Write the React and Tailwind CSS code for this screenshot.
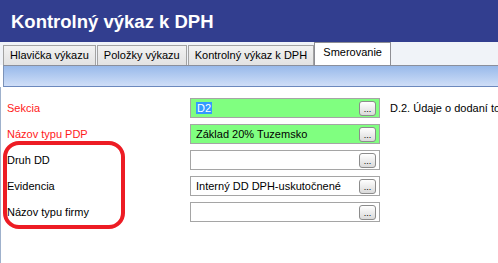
import React from "react";

const tabs = ["Hlavička výkazu", "Položky výkazu", "Kontrolný výkaz k DPH"];

const rows = [
  { label: "Sekcia", red: true, value: "D2", selected: true, green: true, note: "D.2. Údaje o dodaní tovaru a poskytnutí služby" },
  { label: "Názov typu PDP", red: true, value: "Základ 20% Tuzemsko", green: true },
  { label: "Druh DD", value: "" },
  { label: "Evidencia", value: "Interný DD DPH-uskutočnené" },
  { label: "Názov typu firmy", value: "" },
];

const DotsButton = () => (
  <div className="w-[17px] h-[15px] rounded-[3px] border border-[#8c8c8c] bg-gradient-to-b from-white to-[#dadada] flex items-end justify-center text-[9px] leading-[9px] text-black pb-[1px]">
    ...
  </div>
);

const Field = ({ value, selected, green }) => (
  <div
    className={
      "w-[190px] h-[20px] border border-[#a5a5a5] flex items-center pl-[5px] pr-[3px] " +
      (green ? "bg-[#80ff80]" : "bg-white")
    }
  >
    <div className="flex-1 truncate">
      {selected ? (
        <span className="bg-[#3399ff] text-white px-[1px]">{value}</span>
      ) : (
        <span className="text-black">{value}</span>
      )}
    </div>
    <DotsButton />
  </div>
);

export default function App() {
  return (
    <div
      className="relative w-[498px] h-[263px] overflow-hidden bg-white text-[11px]"
      style={{ fontFamily: '"Liberation Sans", Arial, sans-serif' }}
    >
      {/* title */}
      <div className="h-[42px] bg-[#323e8f] pl-[11px] flex items-center text-white font-bold text-[18.5px] pt-[1px]">
        Kontrolný výkaz k DPH
      </div>

      {/* tabs */}
      <div className="h-[23px] bg-[#f0f3f8] pl-[3px] flex items-end">
        {tabs.map((t) => (
          <div
            key={t}
            className="h-[20px] px-[6px] flex items-center border border-b-0 border-[#a3a3a3] bg-gradient-to-b from-[#f2f2f2] to-[#e2e2e2] text-black mr-[1px]"
          >
            {t}
          </div>
        ))}
        <div className="h-[23px] w-[77px] flex items-center justify-center border border-b-0 border-[#8e8e94] bg-white text-black -ml-[1px] pb-[3px]">
          Smerovanie
        </div>
      </div>

      {/* gradient bar */}
      <div className="ml-[3px] h-[22px] border-t border-t-[#8a8f9c] border-b border-b-[#6b88bd] border-l border-l-[#7d93b8] bg-gradient-to-b from-[#98b9ea] to-[#cfdef7]" />

      {/* content */}
      <div className="flex h-full">
        <div className="w-[3px] bg-[#d8e2f0] border-r border-[#9fb1cc]" />
        <div className="flex-1 pt-[11px] pl-[6px] flex flex-col gap-[6px]">
          {rows.map((r) => (
            <div key={r.label} className="flex items-center h-[20px]">
              <div className={"w-[183px] " + (r.red ? "text-[#ff1a1a]" : "text-black")}>{r.label}</div>
              <Field value={r.value} selected={r.selected} green={r.green} />
              {r.note && <div className="ml-[10px] whitespace-nowrap text-black">{r.note}</div>}
            </div>
          ))}
        </div>
      </div>

      {/* annotation */}
      <div className="absolute left-[3px] top-[141px] w-[122px] h-[88px] border-[4px] border-[#ed1c24] rounded-[16px] pointer-events-none" />
    </div>
  );
}
